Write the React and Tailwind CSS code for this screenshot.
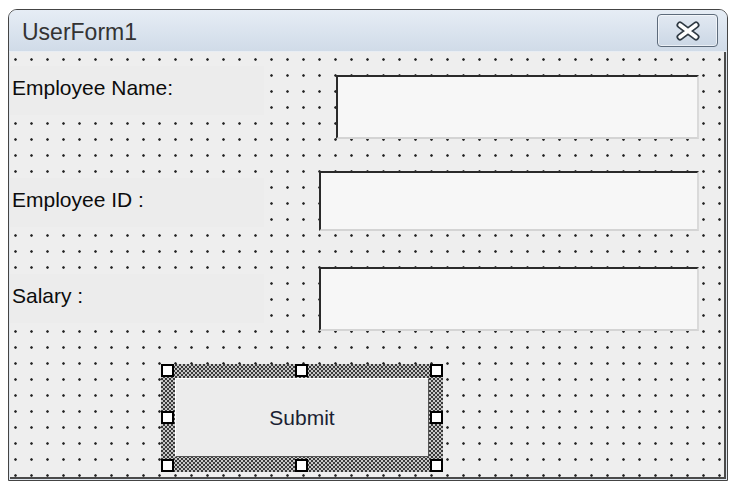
import React from 'react';

const font = { fontFamily: '"Liberation Sans", Arial, sans-serif' };

const Label = ({ text, className }) => (
    <div className={`w-[254px] h-[49px] bg-[#ececec] flex items-center pl-[2px] pb-[5px] text-[21px] text-[#0c0c0c] ${className}`}>
        {text}
    </div>
);

const TextBox = ({ className }) => (
    <div className={`bg-[#f7f7f7] border-2 border-t-[#2a2a2a] border-l-[#2a2a2a] border-r-[#dadada] border-b-[#d4d4d4] ${className}`} />
);

const Handle = ({ className }) => (
    <div className={`absolute w-[13px] h-[13px] bg-white border-2 border-black ${className}`} />
);

const CloseButton = () => (
    <div className="w-[61px] h-[33px] rounded-[4px] border border-[#5d6b7b] bg-gradient-to-b from-[#e2e9f2] to-[#cbd7e5] shadow-[inset_0_0_0_1px_rgba(255,255,255,0.6)] flex items-center justify-center">
        <svg width="26" height="20" viewBox="0 0 26 20">
            <path d="M5 4 L21 16 M21 4 L5 16" stroke="#2f3a44" strokeWidth="7" strokeLinecap="round" fill="none" />
            <path d="M5 4 L21 16 M21 4 L5 16" stroke="#ffffff" strokeWidth="3.6" strokeLinecap="round" fill="none" />
        </svg>
    </div>
);

export default function App() {
    return (
        <div className="w-[736px] h-[492px] bg-white pt-[9px] pl-[8px]" style={font}>
            <div className="w-[720px] h-[472px] border border-[#444] rounded-t-[9px] flex flex-col overflow-hidden bg-[#dfe6ee]">
                {/* title bar */}
                <div className="h-[42px] flex items-center justify-between pl-[13px] pr-[9px] bg-gradient-to-b from-[#e6edf5] to-[#d0dbe8] border-b border-[#e8edf3]">
                    <span className="text-[23px] text-[#333] mt-[3px]">UserForm1</span>
                    <CloseButton />
                </div>

                {/* client area with the design grid */}
                <div className="flex-1 mx-[1px] mb-[1px] bg-[#eeeeee] bg-[radial-gradient(circle_at_5.5px_7.5px,#222_0.9px,#a0a0a0_1.3px,transparent_1.7px)] bg-[length:16px_16px] border-r-2 border-b-2 border-[#4a4a4a]">
                    <div className="flex items-start mt-[14px]">
                        <Label text="Employee Name:" />
                        <TextBox className="ml-[72px] mt-[9px] w-[363px] h-[64px]" />
                    </div>
                    <div className="flex items-start mt-[32px]">
                        <Label text="Employee ID :" className="mt-[7px]" />
                        <TextBox className="ml-[55px] w-[380px] h-[60px]" />
                    </div>
                    <div className="flex items-start mt-[36px]">
                        <Label text="Salary :" className="mt-[7px]" />
                        <TextBox className="ml-[55px] w-[380px] h-[64px]" />
                    </div>

                    {/* selected command button */}
                    <div className="relative ml-[151px] mt-[33px] w-[282px] h-[108px] p-[14px] pb-[15px] bg-[repeating-conic-gradient(#3a3a3a_0%_25%,#c6c6c6_0%_50%)] bg-[length:4px_4px]">
                        <div className="w-[254px] h-[79px] bg-[#ececec] border border-t-white border-l-white border-r-[#555] border-b-[#555] flex items-center justify-center text-[21px] text-[#1b1f33]">
                            Submit
                        </div>
                        <Handle className="left-0 top-0" />
                        <Handle className="left-[134px] top-0" />
                        <Handle className="left-[269px] top-0" />
                        <Handle className="left-0 top-[47px]" />
                        <Handle className="left-[269px] top-[47px]" />
                        <Handle className="left-0 top-[95px]" />
                        <Handle className="left-[134px] top-[95px]" />
                        <Handle className="left-[269px] top-[95px]" />
                    </div>
                </div>
            </div>
        </div>
    );
}
